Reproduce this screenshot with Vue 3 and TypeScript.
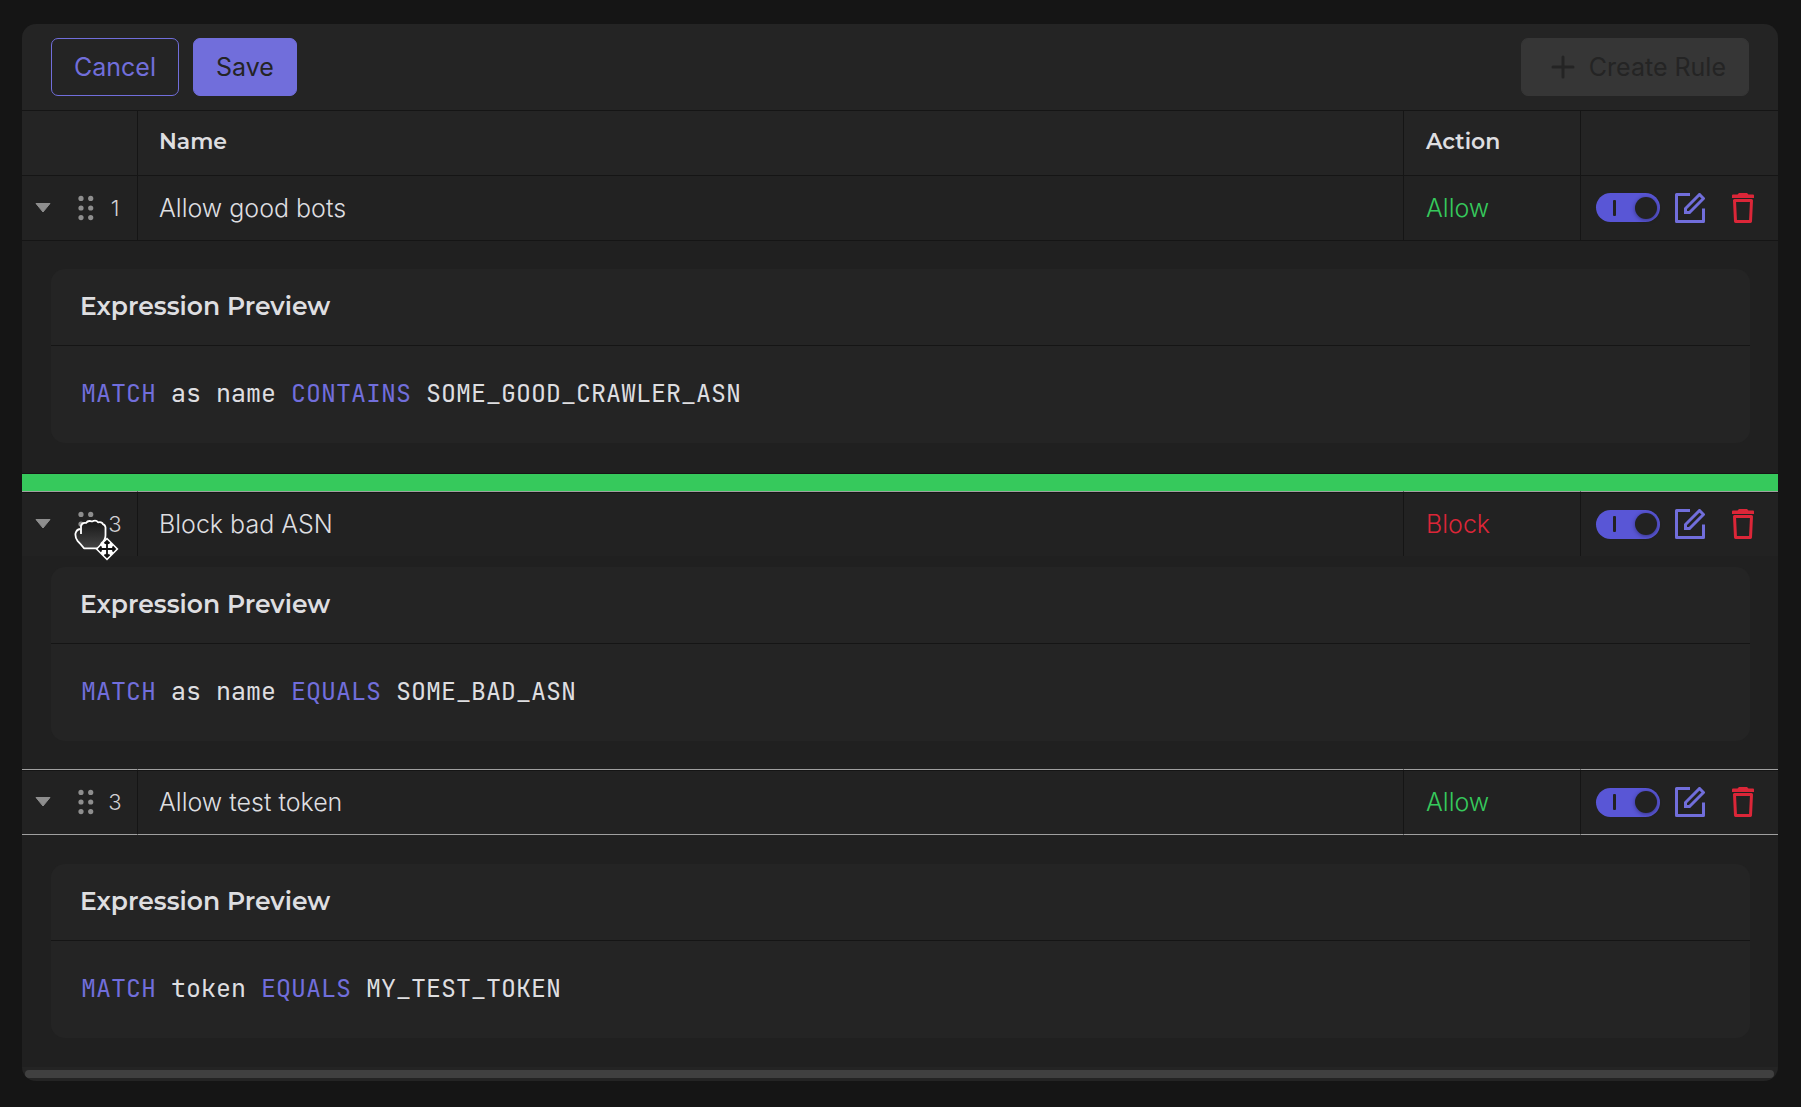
<script setup lang="ts">
import { ref } from 'vue'

interface Token {
  text: string
  keyword: boolean
}

interface Rule {
  id: string
  order: number
  name: string
  action: 'Allow' | 'Block'
  enabled: boolean
  state: 'idle' | 'dragging' | 'target'
  expression: Token[]
}

const kw = (text: string): Token => ({ text, keyword: true })
const val = (text: string): Token => ({ text, keyword: false })

const rules = ref<Rule[]>([
  {
    id: 'good-bots',
    order: 1,
    name: 'Allow good bots',
    action: 'Allow',
    enabled: true,
    state: 'idle',
    expression: [kw('MATCH'), val(' as name '), kw('CONTAINS'), val(' SOME_GOOD_CRAWLER_ASN')],
  },
  {
    id: 'bad-asn',
    order: 3,
    name: 'Block bad ASN',
    action: 'Block',
    enabled: true,
    state: 'dragging',
    expression: [kw('MATCH'), val(' as name '), kw('EQUALS'), val(' SOME_BAD_ASN')],
  },
  {
    id: 'test-token',
    order: 3,
    name: 'Allow test token',
    action: 'Allow',
    enabled: true,
    state: 'target',
    expression: [kw('MATCH'), val(' token '), kw('EQUALS'), val(' MY_TEST_TOKEN')],
  },
])
</script>

<template>
  <main class="panel">
    <header class="toolbar">
      <button type="button" class="btn outline">Cancel</button>
      <button type="button" class="btn solid">Save</button>
      <button type="button" class="btn create" disabled>
        <svg width="24" height="24" viewBox="0 0 24 24" aria-hidden="true">
          <path d="M12 2v20M2 12h20" fill="none" stroke="currentColor" stroke-width="3" stroke-linecap="round" />
        </svg>
        Create Rule
      </button>
    </header>

    <table class="rules">
      <colgroup>
        <col class="col-order" />
        <col />
        <col class="col-action" />
        <col class="col-tools" />
      </colgroup>
      <thead>
        <tr>
          <th></th>
          <th scope="col">Name</th>
          <th scope="col" class="action">Action</th>
          <th></th>
        </tr>
      </thead>
      <tbody v-for="rule in rules" :key="rule.id" :class="rule.state">
        <tr v-if="rule.state === 'dragging'" class="drop">
          <td colspan="4"></td>
        </tr>
        <tr class="row">
          <td class="order-cell">
            <div class="order">
              <button type="button" class="icon chevron" aria-label="Collapse rule">
                <svg width="16" height="10" viewBox="0 0 16 10"><path d="M1 .5h14L8 9z" fill="#8e8e8e" stroke="#8e8e8e" stroke-linejoin="round" /></svg>
              </button>
              <button type="button" class="icon grip" aria-label="Reorder rule">
                <svg width="16" height="26" viewBox="0 0 16 26" fill="#8e8e8e">
                  <circle cx="3" cy="3.4" r="2.6" /><circle cx="12.700" cy="3.4" r="2.6" />
                  <circle cx="3" cy="13" r="2.6" /><circle cx="12.700" cy="13" r="2.6" />
                  <circle cx="3" cy="22.600" r="2.6" /><circle cx="12.700" cy="22.600" r="2.6" />
                </svg>
              </button>
              <span class="number">{{ rule.order }}</span>
              <svg v-if="rule.state === 'dragging'" class="cursor" width="48" height="44" viewBox="0 0 48 44" aria-hidden="true">
                <defs>
                  <linearGradient id="hand" x1="0" y1="0" x2="0" y2="1">
                    <stop offset="0" stop-color="#161616" />
                    <stop offset="1" stop-color="#454545" />
                  </linearGradient>
                </defs>
                <path
                  d="M8 15V7q1-4 5-3q2-3 6-1.500q4-2 6 .8q4-1 5 2q2 .2 2.500 3v8q0 5-4 8l-2.500 5H11q-3-4-6.500-7.500Q2 18 2.500 14.500q1-4 4.500-4.500"
                  fill="url(#hand)" stroke="#fff" stroke-width="1.8" stroke-linejoin="round"
                />
                <path d="M34 18.500L45.500 30L34 41.500L22.500 30z" fill="#fff" />
                <path
                  d="M34 22v16M26 30h16M31.500 24.500L34 22l2.500 2.500M31.500 35.500L34 38l2.500-2.500M28.500 27.500L26 30l2.500 2.500M39.500 27.500L42 30l-2.500 2.500"
                  fill="none" stroke="#111" stroke-width="1.8"
                />
              </svg>
            </div>
          </td>
          <td>{{ rule.name }}</td>
          <td class="action" :class="rule.action === 'Allow' ? 'allow' : 'block'">{{ rule.action }}</td>
          <td class="tools-cell">
            <div class="tools">
              <input v-model="rule.enabled" type="checkbox" class="switch" role="switch" :aria-label="'Enable ' + rule.name" />
              <button type="button" class="icon edit" aria-label="Edit rule">
                <svg width="30" height="30" viewBox="0 0 30 30" fill="none" stroke="#716edb" stroke-width="3" stroke-linejoin="round">
                  <path d="M15 1.500H1.500v27h27V15.500" />
                  <path d="M10.500 15.500v4h4L28.500 5.500L24.500 1.500z" stroke-linejoin="miter" />
                </svg>
              </button>
              <button type="button" class="icon" aria-label="Delete rule">
                <svg width="24" height="30" viewBox="0 0 24 30" fill="none" stroke="#dc2638" stroke-width="3" stroke-linejoin="round">
                  <path d="M3.500 7.500h17l-1 21h-15z" />
                  <path d="M1 5V2.500q0-1 1-1h4.500L8 0h8l1.500 1.500H22q1 0 1 1V5z" fill="#dc2638" stroke="none" />
                </svg>
              </button>
            </div>
          </td>
        </tr>
        <tr class="detail">
          <td colspan="4">
            <section class="card">
              <h2>Expression Preview</h2>
              <pre><span v-for="(token, i) in rule.expression" :key="i" :class="{ keyword: token.keyword }">{{ token.text }}</span></pre>
            </section>
          </td>
        </tr>
      </tbody>
    </table>
    <div class="scroll"><div class="thumb"></div></div>
  </main>
</template>

<style>
body {
  background: #151515;
}
</style>

<style scoped>
.panel {
  margin: 24px 23px 27px 22px;
  border-radius: 14px;
  overflow: hidden;
  background: #242424;
  color: #dedee0;
  font-family: Inter, "Liberation Sans", sans-serif;
  font-size: 25px;
  line-height: 32px;
}

.toolbar {
  display: flex;
  gap: 14px;
  padding: 14px 29px;
  border-bottom: 1px solid #151515;
}

.btn {
  display: flex;
  align-items: center;
  gap: 14px;
  height: 58px;
  box-sizing: border-box;
  padding: 0 22px 1px;
  border: 1px solid #716edb;
  border-radius: 7px;
  font: inherit;
}

.outline {
  background: transparent;
  color: #716edb;
}

.solid {
  background: #716edb;
  color: #242424;
}

.create {
  margin-left: auto;
  padding-left: 29px;
  border-color: #363636;
  background: #363636;
  color: #242424;
}

.rules {
  width: 100%;
  table-layout: fixed;
  border-spacing: 0;
}

.col-order {
  width: 116px;
}

.col-action {
  width: 177px;
}

.col-tools {
  width: 197px;
}

th,
.row td {
  height: 64px;
  padding: 0 21px;
  border-right: 1px solid #151515;
  border-bottom: 1px solid #151515;
  text-align: left;
}

th {
  padding-bottom: 2px;
  height: 62px;
  font-family: Montserrat, Inter, "Liberation Sans", sans-serif;
  font-size: 22px;
  font-weight: 600;
}

th:last-child,
.row td:last-child {
  border-right: 0;
}

.row td {
  background: #222222;
  font-weight: 350;
}

th.action,
.row .action {
  padding-left: 22px;
}

.row .order-cell {
  padding: 0 0 0 13px;
}

.order {
  position: relative;
  display: flex;
  align-items: center;
}

.icon {
  display: flex;
  padding: 0;
  border: 0;
  background: none;
}

.grip {
  margin: 0 14px 0 27px;
}

.number {
  width: 14px;
  color: #d0d0d2;
  font-size: 22px;
  text-align: center;
}

.cursor {
  position: absolute;
  left: 38px;
  top: 11px;
}

.row .allow {
  color: #36c95c;
}

.row .block {
  color: #dc2638;
}

.row .tools-cell {
  padding: 0 0 0 15px;
}

.tools {
  display: flex;
  align-items: center;
}

.switch {
  appearance: none;
  display: flex;
  align-items: center;
  justify-content: space-between;
  width: 64px;
  height: 29px;
  box-sizing: border-box;
  margin: 0;
  padding: 0 3px 0 17px;
  border-radius: 15px;
  background: #5956d6;
}

.switch::before {
  content: "";
  width: 3px;
  height: 16px;
  border-radius: 1px;
  background: #222222;
}

.switch::after {
  content: "";
  width: 22px;
  height: 22px;
  border-radius: 50%;
  background: #222222;
  box-shadow: 0 1px 4px #0006;
}

.edit {
  margin: 0 26px 0 15px;
}

.idle .row td {
  height: 63px;
  padding-bottom: 1px;
}

.drop td {
  height: 17px;
  padding: 0;
  background: #36c95c;
}

.detail td {
  padding: 28px 28px 30px 29px;
  border-bottom: 1px solid #151515;
  background: #202020;
}

.dragging .row td {
  border-top: 1px solid #a0a0a0;
  border-bottom: 0;
  box-shadow: inset 0 1px #151515;
}

.dragging .detail td {
  padding: 11px 28px 28px 29px;
  border-bottom: 0;
}

.target .row td {
  border-top: 1px solid #a0a0a0;
  border-bottom-color: #a0a0a0;
  box-shadow: inset 0 1px #151515;
}

.target .detail td {
  padding: 29px 28px 29px 29px;
  border-bottom: 0;
}

.card {
  border-radius: 14px;
  background: #242424;
}

h2 {
  margin: 0;
  padding: 21px 29px 23px;
  border-bottom: 1px solid #151515;
  font-family: Montserrat, Inter, "Liberation Sans", sans-serif;
  font-size: 25px;
  font-weight: 600;
  line-height: 32px;
}

pre {
  margin: 0;
  padding: 31px 29px 34px 30px;
  font-family: "JetBrains Mono", "Liberation Mono", monospace;
  font-size: 25px;
  line-height: 32px;
}

.keyword {
  color: #716edb;
}

.scroll {
  padding: 3px 4px 3px 3px;
}

.thumb {
  height: 8px;
  border-radius: 4px;
  background: #404040;
}
</style>
